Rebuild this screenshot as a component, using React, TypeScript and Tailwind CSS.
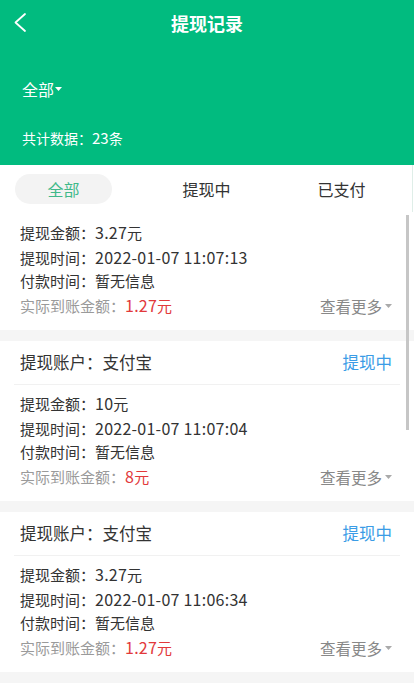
type Record = {
  amount: string;
  unit: string;
  time: string;
  payTime: string;
  actual: string;
};

const records: Record[] = [
  { amount: "3.27", unit: "元", time: "2022-01-07 11:07:13", payTime: "暂无信息", actual: "1.27" },
  { amount: "10", unit: "元", time: "2022-01-07 11:07:04", payTime: "暂无信息", actual: "8" },
  { amount: "3.27", unit: "元", time: "2022-01-07 11:06:34", payTime: "暂无信息", actual: "1.27" },
];

function Caret({ className }: { className: string }) {
  return (
    <svg width="7" height="4" viewBox="0 0 7 4" className={className}>
      <path d="M0 0h7L3.5 4z" fill="currentColor" />
    </svg>
  );
}

// latin digits render wider in the original font
function Num({ children }: { children: string }) {
  return <span className="text-[16px] tracking-[0.25px]">{children}</span>;
}

function Rows({ r }: { r: Record }) {
  return (
    <div className="px-[20px] text-[15px] text-[#333]">
      <div className="h-[24.5px] leading-[24.5px]">
        提现金额：<Num>{r.amount}</Num>
        {r.unit}
      </div>
      <div className="h-[24.5px] leading-[24.5px]">
        提现时间：<Num>{r.time}</Num>
      </div>
      <div className="h-[24.5px] leading-[24.5px]">付款时间：{r.payTime}</div>
      <div className="h-[24.5px] leading-[24.5px] flex items-center justify-between">
        <span>
          <span className="text-[#9a9a9a]">实际到账金额：</span>
          <span className="text-[#e2393b]">
            <Num>{r.actual}</Num>元
          </span>
        </span>
        <span className="flex items-center gap-[3px] text-[15.5px] text-[#888] pr-[2px]">
          查看更多
          <Caret className="text-[#aaa]" />
        </span>
      </div>
    </div>
  );
}

function Card({ r }: { r: Record }) {
  return (
    <div className="bg-white pb-[12px]">
      <div className="h-[43px] px-[20px] flex items-center justify-between text-[16.5px] pr-[22px]">
        <span className="text-[#333]">提现账户：支付宝</span>
        <span className="text-[#3b9ce6]">提现中</span>
      </div>
      <div className="mx-[14px] h-px bg-[#f1f1f1]" />
      <div className="pt-[6px]">
        <Rows r={r} />
      </div>
    </div>
  );
}

export default function App() {
  return (
    <div className="w-[414px] h-[696px] flex flex-col overflow-hidden bg-white font-['Noto_Sans_CJK_SC','Noto_Sans',sans-serif]">
      {/* green header */}
      <div className="h-[165px] bg-[#01bb7f] text-white">
        <div className="h-[46px] relative flex items-center justify-center">
          <svg
            width="14"
            height="22"
            viewBox="0 0 14 22"
            className="absolute left-[13px] top-[12px]"
            fill="none"
            stroke="currentColor"
            strokeWidth="1.8"
            strokeLinecap="round"
            strokeLinejoin="round"
          >
            <path d="M12 2L2.5 10.5L12 19" />
          </svg>
          <span className="text-[18px] font-bold leading-none">提现记录</span>
        </div>
        <div className="h-[84px] pl-[22px] flex items-center pt-[1px]">
          <span className="text-[16px] leading-none">全部</span>
          <Caret className="ml-[1px] mt-[1px]" />
        </div>
        <div className="pl-[22px] text-[14px] leading-none">
          共计数据：<span className="text-[15px]">23</span>条
        </div>
      </div>

      {/* tabs */}
      <div className="h-[47px] flex items-center pl-[15px] text-[16px] relative">
        <div className="w-[97px] h-[30px] rounded-full bg-[#f3f3f3] flex items-center justify-center text-[#3fb98a]">
          全部
        </div>
        <div className="ml-[46px] w-[97px] text-center text-[#333]">提现中</div>
        <div className="ml-[38px] w-[97px] text-center text-[#333]">已支付</div>
        <div className="absolute right-[1px] top-0 h-full w-px bg-[#dfeee8]" />
      </div>

      {/* list */}
      <div className="flex-1 relative overflow-hidden bg-[#f5f5f5]">
        <div className="flex flex-col gap-[11px]">
          <div className="bg-white pt-[8px] pb-[12px]">
            <Rows r={records[0]} />
          </div>
          <Card r={records[1]} />
          <Card r={records[2]} />
          <div className="bg-white h-[40px]" />
        </div>
        <div className="absolute right-[5px] top-[3px] w-[3px] h-[215px] bg-[#c6c6c6]" />
      </div>
    </div>
  );
}
